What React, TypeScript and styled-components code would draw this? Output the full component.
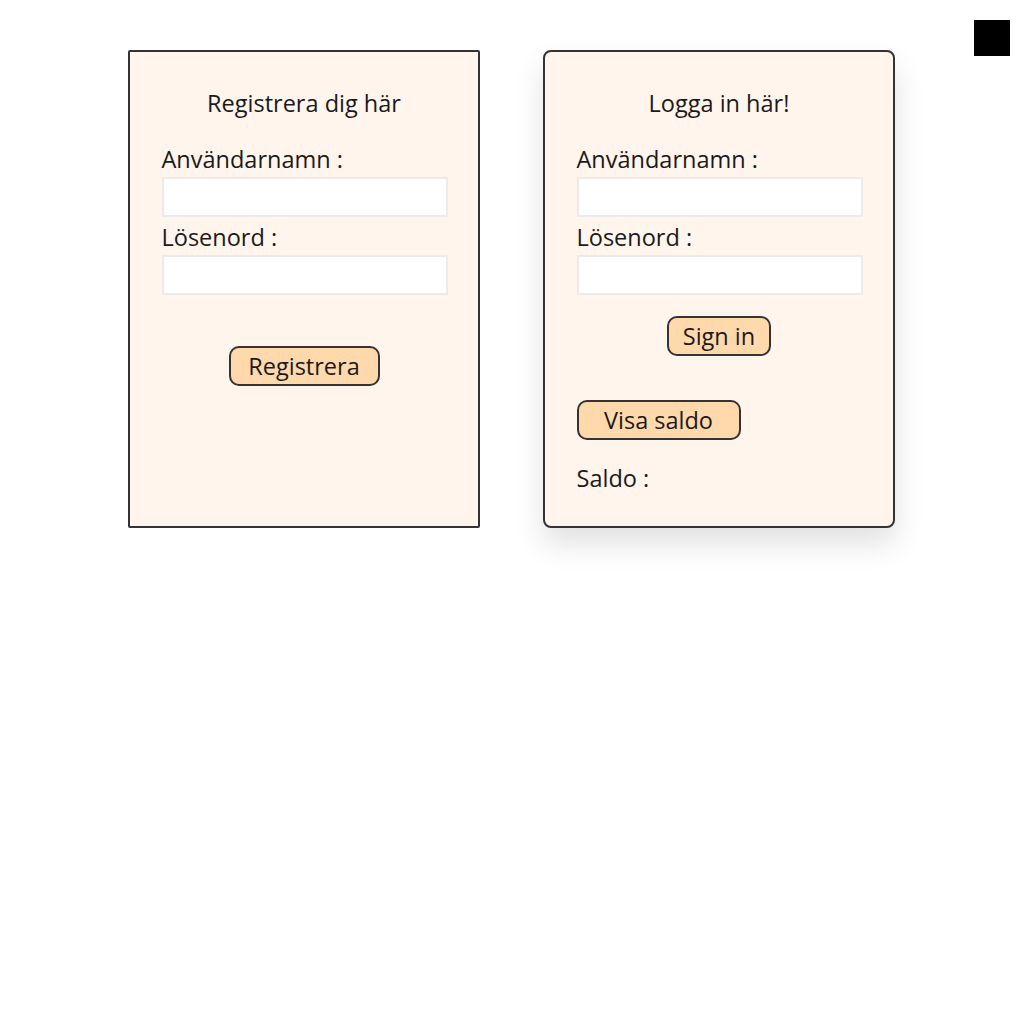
import React from "react";
import styled, { createGlobalStyle } from "styled-components";

const Global = createGlobalStyle`
  html, body { margin: 0; padding: 0; background: #ffffff; }
  body { font-family: "Open Sans", "Noto Sans", sans-serif; color: #1a1a1a; }
  * { box-sizing: border-box; }
`;

const Page = styled.div`
  position: relative;
  width: 1024px;
  min-height: 1024px;
  display: flex;
  justify-content: center;
  align-items: flex-start;
  gap: 63px;
  padding-top: 50px;
  padding-right: 2px;
`;

const Corner = styled.div`
  position: absolute;
  top: 20px;
  right: 14px;
  width: 36px;
  height: 36px;
  background: #000;
`;

const Card = styled.div<{ $rounded?: boolean }>`
  width: 352px;
  height: 478px;
  background: #fff5ec;
  border: 2px solid #333333;
  border-radius: ${(p) => (p.$rounded ? "8px" : "2px")};
  box-shadow: ${(p) => (p.$rounded ? "0 16px 30px rgba(0,0,0,0.12)" : "none")};
  padding: 35px 31px 0 32px;
  display: flex;
  flex-direction: column;
`;

const Title = styled.div`
  text-align: center;
  font-size: 23.5px;
  line-height: 32px;
  margin-bottom: 24px;
`;

const Label = styled.label`
  font-size: 23.5px;
  line-height: 32px;
  display: block;
  margin-bottom: 2px;
`;

const Input = styled.input`
  width: 286px;
  height: 40px;
  border: 2px solid #eceaea;
  background: #fff;
  margin-bottom: 4px;
  outline: none;
  font-size: 18px;
`;

const ButtonRow = styled.div<{ $top: number; $align?: string }>`
  display: flex;
  justify-content: ${(p) => p.$align || "center"};
  margin-top: ${(p) => p.$top}px;
`;

const Button = styled.button<{ $w: number }>`
  width: ${(p) => p.$w}px;
  height: 40px;
  background: #ffd9ab;
  border: 2px solid #333333;
  border-radius: 10px;
  font-family: "Open Sans", "Noto Sans", sans-serif;
  font-size: 23.5px;
  color: #1a1a1a;
  padding: 0;
  display: flex;
  align-items: center;
  justify-content: center;
`;

const Saldo = styled.div`
  font-size: 23.5px;
  line-height: 30px;
  margin-top: 23px;
`;

export default function App() {
  return (
    <>
      <Global />
      <Page>
        <Card>
          <Title>Registrera dig här</Title>
          <Label>Användarnamn :</Label>
          <Input />
          <Label>Lösenord :</Label>
          <Input />
          <ButtonRow $top={47}>
            <Button $w={151}>Registrera</Button>
          </ButtonRow>
        </Card>
        <Card $rounded>
          <Title>Logga in här!</Title>
          <Label>Användarnamn :</Label>
          <Input />
          <Label>Lösenord :</Label>
          <Input />
          <ButtonRow $top={17}>
            <Button $w={104}>Sign in</Button>
          </ButtonRow>
          <ButtonRow $top={44} $align="flex-start">
            <Button $w={164}>Visa saldo</Button>
          </ButtonRow>
          <Saldo>Saldo :</Saldo>
        </Card>
        <Corner />
      </Page>
    </>
  );
}
